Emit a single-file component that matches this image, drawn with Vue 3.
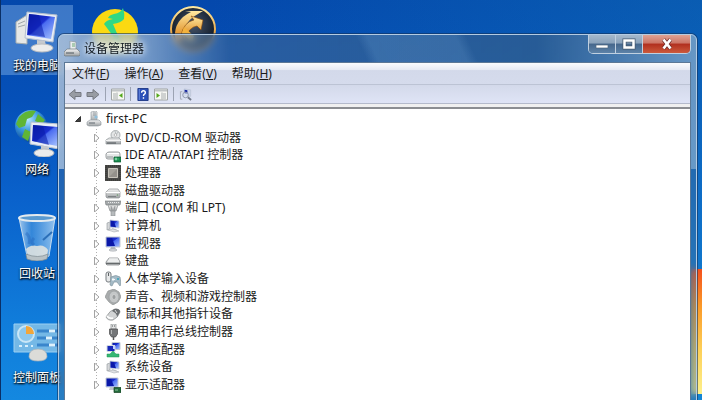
<template>
  <div class="desktop">
    <!-- shared drawings, used by id -->
    <svg class="sprite" aria-hidden="true">
      <defs>
        <linearGradient id="screen" x1="0" y1="0" x2="1" y2="1">
          <stop offset="0" stop-color="#0818a0" />
          <stop offset="0.45" stop-color="#1a2fd0" />
          <stop offset="0.5" stop-color="#4a6cf0" />
          <stop offset="1" stop-color="#a8c4ff" />
        </linearGradient>
        <linearGradient id="metal" x1="0" y1="0" x2="0" y2="1">
          <stop offset="0" stop-color="#f4f4f4" />
          <stop offset="1" stop-color="#9da1a3" />
        </linearGradient>
        <linearGradient id="glass" x1="0" y1="0" x2="1" y2="0">
          <stop offset="0" stop-color="#c8e0f4" stop-opacity="0.8" />
          <stop offset="0.35" stop-color="#4f9be0" stop-opacity="0.6" />
          <stop offset="1" stop-color="#b5d8f5" stop-opacity="0.8" />
        </linearGradient>
        <linearGradient id="gold" x1="0" y1="0" x2="0" y2="1">
          <stop offset="0" stop-color="#ffe9a0" />
          <stop offset="1" stop-color="#d87808" />
        </linearGradient>
        <radialGradient id="globe" cx="0.4" cy="0.3" r="0.7">
          <stop offset="0" stop-color="#b8e8ff" />
          <stop offset="0.5" stop-color="#3c9ae0" />
          <stop offset="1" stop-color="#0c4c9c" />
        </radialGradient>
        <radialGradient id="dark" cx="0.5" cy="0.4" r="0.6">
          <stop offset="0" stop-color="#46566c" />
          <stop offset="1" stop-color="#0c1420" />
        </radialGradient>
      </defs>

      <symbol id="root" viewBox="0 0 16 16">
        <path d="M5 1l5-1 1 1v9l-5 1-1-1z" fill="url(#metal)" stroke="#8b949b" stroke-width=".6" />
        <path d="M7 2h3M7 4h3" stroke="#6e7b85" stroke-width=".7" />
        <circle cx="10" cy="6" r="1.6" fill="#8fc0dc" />
        <path d="M1 11l3-2h9l2 2v3l-3 1H3l-2-1z" fill="url(#metal)" stroke="#8b949b" stroke-width=".6" />
        <path d="M3 12h6" stroke="#626b72" />
      </symbol>
      <symbol id="dvd" viewBox="0 0 16 16">
        <circle cx="10.500" cy="5" r="4.500" fill="#e3e5e6" stroke="#999fa2" stroke-width=".8" />
        <path d="M10 1l1 3M13 2l-2 3" stroke="#b7bdc0" />
        <circle cx="10.500" cy="5" r="1.300" fill="#fff" stroke="#999" stroke-width=".6" />
        <path d="M1 10l3-2h10l2 2v4H1z" fill="url(#metal)" stroke="#8a9093" stroke-width=".7" />
        <path d="M1 10.500h15" stroke="#f5f5f5" />
        <path d="M2 13h9" stroke="#4d5356" />
      </symbol>
      <symbol id="ide" viewBox="0 0 16 16">
        <path d="M1 7q1-2 3-2h9q2 0 2 2v3q0 2-2 2H3q-2 0-2-2z" fill="#e4e6e6" stroke="#83888a" stroke-width=".8" />
        <path d="M2 6.500h12" stroke="#fff" />
        <path d="M2 10h6" stroke="#8f9496" />
        <path d="M9 10h7v5H9z" fill="#178a4c" stroke="#0c5a32" stroke-width=".7" />
        <path d="M10 11h2v2h-2zM13 12h1" fill="#79d0a0" stroke="#79d0a0" stroke-width=".5" />
      </symbol>
      <symbol id="cpu" viewBox="0 0 16 16">
        <path d="M0 0h16v16H0z" fill="#4a4a48" />
        <path d="M1 1h14v14H1z" fill="none" stroke="#33332f" stroke-dasharray="1 1" />
        <path d="M3.500 3.500h9v9h-9z" fill="#a5a29b" stroke="#c9c5bc" />
        <path d="M4 12l8-8v8z" fill="#94918b" />
      </symbol>
      <symbol id="disk" viewBox="0 0 16 16">
        <path d="M1 9l3-3h9l2 3v5l-1 1H2l-1-1z" fill="url(#metal)" stroke="#8f9496" stroke-width=".7" />
        <path d="M1 9.500h14" stroke="#fff" />
        <path d="M3 13.500h8" stroke="#7c8183" />
        <circle cx="12.500" cy="12" r=".8" fill="#6b9c6b" />
      </symbol>
      <symbol id="port" viewBox="0 0 16 16">
        <path d="M0 1h16l-1 4H1z" fill="#a5a9ab" stroke="#74797b" stroke-width=".6" />
        <path d="M3 2.500h11" stroke="#e9eaea" stroke-dasharray="1 1" />
        <path d="M3 5h10l-2 6H5z" fill="url(#metal)" stroke="#8b8f91" stroke-width=".7" />
        <path d="M6 11h4v5H6z" fill="#b7bbbd" stroke="#8b8f91" stroke-width=".6" />
        <path d="M6 6l1 4M10 6L9 10" stroke="#7b8082" stroke-width=".7" />
      </symbol>
      <symbol id="pc" viewBox="0 0 16 16">
        <path d="M2 5l3-1v7l-3 1z" fill="#d6d8da" stroke="#8d9499" stroke-width=".6" />
        <path d="M5 2l9 1v7l-9-1z" fill="url(#screen)" stroke="#c7cdd4" stroke-width=".8" />
        <path d="M6 3l3 .4 2 5.800L6 8.500z" fill="#0a18a8" />
        <path d="M7 10l4 1 2 2H6z" fill="#c9ccd0" />
        <path d="M3 12l5-1 6 2-5 1z" fill="#dfe1e4" stroke="#9fa5aa" stroke-width=".5" />
      </symbol>
      <symbol id="monitor" viewBox="0 0 16 16">
        <path d="M1 1h14v10H1z" fill="url(#screen)" stroke="#c3c9d2" />
        <path d="M2 2h5l3 8H2z" fill="#0a18a8" />
        <path d="M6 11h4l1 3H5z" fill="#b5bac0" />
        <ellipse cx="8" cy="14" rx="4" ry="1.200" fill="#d6d9dc" stroke="#969ca1" stroke-width=".5" />
      </symbol>
      <symbol id="keyboard" viewBox="0 0 16 16">
        <path d="M1 9l3-4h9l2 4v2l-1 1H2l-1-1z" fill="#d9dcdd" stroke="#7b8082" stroke-width=".7" />
        <path d="M4 6h9M3 8h11" stroke="#fff" />
        <path d="M1 10.500h14" stroke="#65696b" stroke-width="1.500" />
      </symbol>
      <symbol id="hid" viewBox="0 0 16 16">
        <rect x="1" y="1" width="5" height="10" rx="2" fill="#e6e8e9" stroke="#777c80" />
        <path d="M3.500 2v3" stroke="#5d6265" />
        <path d="M6 6q5-3 9 0l1 7-1 2-3-4H9l-2 4-2-1z" fill="#a4bac6" stroke="#8296a0" stroke-width=".7" />
        <path d="M8 7v3M7 8.500h3" stroke="#f5fafc" />
        <circle cx="13" cy="8" r="1" fill="#35a0b8" />
      </symbol>
      <symbol id="sound" viewBox="0 0 16 16">
        <path d="M3 2l6-2 5 3 2 5-3 5-5 3-4-3-4-5z" fill="#a9acad" stroke="#8f9394" stroke-width=".7" />
        <ellipse cx="9" cy="8" rx="5" ry="6" fill="#c4c7c8" stroke="#989c9d" stroke-width=".7" />
        <ellipse cx="9" cy="8" rx="2" ry="2.500" fill="#9b9fa0" stroke="#ddd" stroke-width=".6" />
      </symbol>
      <symbol id="mouse" viewBox="0 0 16 16">
        <path d="M1 11q4-7 9-8 5 0 5 3-2 6-7 8-5 1-7-3z" fill="#d2d4d5" stroke="#85898b" stroke-width=".7" />
        <path d="M9 3q6-1 6 3l-3 5q0-4-5-6z" fill="#6a6e71" />
        <path d="M10 4l2 3" stroke="#d8d8d8" />
        <path d="M2 10q2 3 6 2" stroke="#fff" stroke-width="1.500" fill="none" />
      </symbol>
      <symbol id="usb" viewBox="0 0 16 16">
        <path d="M6 0h5v5H6z" fill="#e2e4e5" stroke="#8b8f91" stroke-width=".7" />
        <path d="M7 2h1M9 2h1" stroke="#555" />
        <path d="M4.500 5h8v5l-2 3h-4l-2-3z" fill="#747678" stroke="#4a4c4e" stroke-width=".7" />
        <path d="M6.500 6v4" stroke="#b7b9ba" />
        <path d="M8.500 13v3" stroke="#555" stroke-width="1.500" />
      </symbol>
      <symbol id="net" viewBox="0 0 16 16">
        <path d="M7 .5h8v7H7z" fill="url(#screen)" stroke="#c0c8d2" />
        <path d="M2 3.500h8v6H2z" fill="#1828b8" stroke="#d3dae2" />
        <path d="M8 4h2v3H8z" fill="#c5d5fa" />
        <path d="M8 9l3 3h3v3H2v-3h3z" fill="#36b873" stroke="#219656" stroke-width=".5" />
      </symbol>
      <symbol id="display" viewBox="0 0 16 16">
        <path d="M1 1h12v9H1z" fill="url(#screen)" stroke="#c3c9d2" />
        <path d="M2 2h4l3 7H2z" fill="#0a18a8" />
        <path d="M5 10h4l1 3H4z" fill="#c2c6ca" />
        <path d="M9 10.500h7v5H9z" fill="#246b3c" stroke="#12401f" stroke-width=".7" />
        <path d="M10 13h3" stroke="#8fc59d" />
      </symbol>
      <symbol id="manager" viewBox="0 0 16 16">
        <path d="M6 0l6 1v9l-6-1z" fill="#e9edf0" stroke="#8c969e" stroke-width=".7" />
        <path d="M8 3h3M8 5h3" stroke="#6ca875" />
        <path d="M0 11l3-3h10l3 3v3l-1 1H1l-1-1z" fill="url(#metal)" stroke="#6e7880" stroke-width=".7" />
        <path d="M2 12h8" stroke="#4d565d" />
      </symbol>

      <symbol id="arrow" viewBox="0 0 14 12">
        <path d="M1 6l6-5v3h6v4H7v3z" fill="#989ca3" stroke="#747880" stroke-width="1" />
      </symbol>
      <symbol id="pane" viewBox="0 0 14 12">
        <path d="M.5.500h13v11H.5z" fill="#f7f8f4" stroke="#a0a5a5" />
        <path d="M1 2h12" stroke="#bfc3c5" stroke-width="2" />
        <path d="M6 4v7M2 5.500h3M2 7.500h3M2 9.500h3" stroke="#a7acae" />
        <path d="M11.500 4.500v5L8 7z" fill="#55a81c" />
      </symbol>
      <symbol id="help" viewBox="0 0 12 14">
        <path d="M.5.500h11v13H.5z" fill="#2b50b8" stroke="#1c3684" />
        <path d="M2 1v12" stroke="#6d8ce0" />
        <path d="M4.500 5q0-2 2-2t2 2q0 1-1 1.500T6.500 8.500M6.500 10v1.500" fill="none" stroke="#fff" stroke-width="1.500" />
      </symbol>
      <symbol id="scan" viewBox="0 0 14 14">
        <path d="M1 4v8M1 4h2M1 12h2" stroke="#a3a9b5" fill="none" />
        <path d="M5 1l7 1v7l-7-1z" fill="#cdd6ec" stroke="#bcc4d4" stroke-width=".8" />
        <path d="M5.500 2l3 .5v4l-3-.5z" fill="#1626a0" />
        <circle cx="6.500" cy="7.500" r="3" fill="#dfe6f4" fill-opacity=".6" stroke="#8b94a8" />
        <path d="M9 10l3.500 3" stroke="#737a8a" stroke-width="2" />
      </symbol>

      <symbol id="big-pc" viewBox="0 0 48 48">
        <path d="M3 17l11-7v29L3 38z" fill="#e6e8e6" stroke="#a4acae" />
        <path d="M5 19l7-3M5 22l7-2" stroke="#9fa6a8" />
        <path d="M14 7l30 3-4 27-28-4z" fill="#e8edf5" stroke="#b5c0cf" />
        <path d="M16 9l26 3-4 22-24-4z" fill="url(#screen)" />
        <path d="M17 9l9 1 6 22-17-3z" fill="#0a1ba8" fill-opacity=".55" />
        <path d="M24 35l8 1 1 5h-9z" fill="#c5c9ce" />
        <ellipse cx="29" cy="43" rx="11" ry="4" fill="#ececec" stroke="#b9bcc0" />
      </symbol>
      <symbol id="big-net" viewBox="0 0 48 48">
        <circle cx="18" cy="17" r="16" fill="url(#globe)" />
        <path d="M6 8q8-8 17-6l-4 6-5 2-2 7-6 2-3-4zM12 20l6 3-3 9-6-4zM25 5l7 6-3 4-7-3z" fill="#5fb536" />
        <path d="M18 13l29 2-1 25-29-5z" fill="#e8edf5" stroke="#b5c0cf" />
        <path d="M20 16l25 2-1 19-25-5z" fill="url(#screen)" />
        <path d="M21 16l9 1 6 19-16-4z" fill="#0a1ba8" fill-opacity=".55" />
        <path d="M28 36l8 2v5h-8z" fill="#c5c9ce" />
        <ellipse cx="31" cy="44" rx="10" ry="4" fill="#ececec" stroke="#b9bcc0" />
      </symbol>
      <symbol id="big-bin" viewBox="0 0 48 48">
        <path d="M6 5h36l-6 38q-12 6-22 0z" fill="url(#glass)" stroke="#c5dcef" />
        <path d="M13 36q5-5 11-3 7-2 11 4l-1 6q-10 4-19 0z" fill="#e9e8e1" fill-opacity=".85" />
        <path d="M13 20q5 4 3 11M21 25q-4 4 0 7" fill="none" stroke="#2566bc" stroke-width="3" stroke-opacity=".45" />
        <path d="M30 27l9-8" stroke="#2c6fb8" stroke-width="2" />
        <path d="M13 41q12 5 22 0l-1 5q-10 4-20 0z" fill="#b9c2c6" stroke="#7c8990" stroke-width=".7" />
        <ellipse cx="24" cy="5" rx="18" ry="3" fill="#5a9ad0" stroke="#e4eaee" stroke-width="2" />
      </symbol>
      <symbol id="big-panel" viewBox="0 0 48 48">
        <path d="M1 7h46v28H1z" fill="#74b8e6" stroke="#9cd0f2" />
        <circle cx="13" cy="17" r="8" fill="#8cc8ee" stroke="#c9e6f7" stroke-width="2" />
        <path d="M13 17V9q7 0 8 8z" fill="#f2a63a" />
        <path d="M24 14h22M24 21h22M24 28h22" stroke="#3a86cc" stroke-width="3" />
        <path d="M36 14h6M33 21h6M36 28h6" stroke="#def2fc" stroke-width="3" />
        <path d="M6 29h3M12 29h3M18 29h2" stroke="#d6eefc" stroke-width="2" />
        <path d="M16 40q0-8 9-8t9 8q-1 4-9 4t-9-4z" fill="#dcdcd8" stroke="#a9b2b8" stroke-width=".7" />
      </symbol>
      <symbol id="big-music" viewBox="0 0 48 48">
        <circle cx="24" cy="27" r="23" fill="#fbd912" />
        <path d="M17 13q1-3 6-4 7-1 9-6 2 6 1 11-3 4-11 5l6 14v6L13 19q2-4 9-5z" fill="#31d884" />
      </symbol>
      <symbol id="big-game" viewBox="0 0 48 48">
        <circle cx="24" cy="24" r="22" fill="url(#dark)" stroke="url(#gold)" stroke-width="2" />
        <path d="M6 32Q5 15 22 7l-6-1h18l-5 3Q14 17 13 34l-5 3z" fill="url(#gold)" />
        <path d="M12 30q3-13 13-15l-3-4 12 4-2 10-4-4q-8 1-12 13z" fill="url(#gold)" stroke="#8a4a08" stroke-width=".6" />
        <path d="M15 22l10 9-2 6-10-9z" fill="#f3b23c" />
      </symbol>
    </svg>

    <div class="flag"></div>

    <div class="shortcuts">
      <a
        v-for="item in shortcuts"
        :key="item.icon"
        href="#"
        class="shortcut"
        :class="{ selected: item.selected, top: item.top }"
      >
        <svg class="shortcut-icon"><use :href="'#' + item.icon" /></svg>
        <span>{{ item.label }}</span>
      </a>
    </div>

    <main class="window">
      <header class="titlebar">
        <svg class="icon"><use href="#manager" /></svg>
        <h1>设备管理器</h1>
        <div class="caption">
          <button type="button" class="min" aria-label="最小化">
            <svg viewBox="0 0 14 12"><path d="M1 7h12v3H1z" fill="#fff" stroke="#52677f" stroke-width=".7" /></svg>
          </button>
          <button type="button" class="max" aria-label="最大化">
            <svg viewBox="0 0 14 12">
              <path d="M2.500 2.500h9v7h-9z" fill="none" stroke="#44586f" stroke-width="4" />
              <path d="M2.500 2.500h9v7h-9z" fill="none" stroke="#fff" stroke-width="2.500" />
            </svg>
          </button>
          <button type="button" class="close" aria-label="关闭">
            <svg viewBox="0 0 14 12">
              <path d="M3.500 1.500l7 9M10.500 1.500l-7 9" stroke="#6a2a28" stroke-width="4" />
              <path d="M3.500 1.500l7 9M10.500 1.500l-7 9" stroke="#fff" stroke-width="2.800" />
            </svg>
          </button>
        </div>
      </header>

      <div class="client">
        <nav class="menubar">
          <button v-for="m in menus" :key="m.key" type="button">{{ m.label }}(<u>{{ m.key }}</u>)</button>
        </nav>

        <div class="toolbar">
          <button type="button" aria-label="后退"><svg class="tool"><use href="#arrow" /></svg></button>
          <button type="button" aria-label="前进"><svg class="tool flip"><use href="#arrow" /></svg></button>
          <i class="divider"></i>
          <button type="button" aria-label="显示控制台树"><svg class="tool"><use href="#pane" /></svg></button>
          <i class="divider"></i>
          <button type="button" aria-label="帮助"><svg class="tool"><use href="#help" /></svg></button>
          <button type="button" aria-label="显示操作窗格"><svg class="tool flip"><use href="#pane" /></svg></button>
          <i class="divider"></i>
          <button type="button" aria-label="扫描检测硬件改动"><svg class="tool"><use href="#scan" /></svg></button>
        </div>

        <div class="tree">
          <div class="row root-row">
            <button type="button" class="expander" aria-label="折叠" @click="open = !open">
              <svg viewBox="0 0 8 8"><path d="M6.500 1.500v5h-5z" fill="#404040" stroke="#333" /></svg>
            </button>
            <svg class="icon"><use href="#root" /></svg>
            <span>first-PC</span>
          </div>
          <ul v-if="open" class="devices">
            <li v-for="d in devices" :key="d.label" class="row">
              <button type="button" class="expander" aria-label="展开">
                <svg viewBox="0 0 8 8"><path d="M1.500 0v8L6 4z" fill="#fff" stroke="#a3a3a3" /></svg>
              </button>
              <svg class="icon"><use :href="'#' + d.icon" /></svg>
              <span>{{ d.label }}</span>
            </li>
          </ul>
        </div>
      </div>
    </main>
  </div>
</template>

<script setup>
import { ref } from "vue";

const open = ref(true);

const shortcuts = [
  { icon: "big-pc", label: "我的电脑", selected: true },
  { icon: "big-net", label: "网络" },
  { icon: "big-bin", label: "回收站" },
  { icon: "big-panel", label: "控制面板" },
  { icon: "big-music", label: "", top: true },
  { icon: "big-game", label: "", top: true },
];

const menus = [
  { label: "文件", key: "F" },
  { label: "操作", key: "A" },
  { label: "查看", key: "V" },
  { label: "帮助", key: "H" },
];

const devices = [
  { icon: "dvd", label: "DVD/CD-ROM 驱动器" },
  { icon: "ide", label: "IDE ATA/ATAPI 控制器" },
  { icon: "cpu", label: "处理器" },
  { icon: "disk", label: "磁盘驱动器" },
  { icon: "port", label: "端口 (COM 和 LPT)" },
  { icon: "pc", label: "计算机" },
  { icon: "monitor", label: "监视器" },
  { icon: "keyboard", label: "键盘" },
  { icon: "hid", label: "人体学输入设备" },
  { icon: "sound", label: "声音、视频和游戏控制器" },
  { icon: "mouse", label: "鼠标和其他指针设备" },
  { icon: "usb", label: "通用串行总线控制器" },
  { icon: "net", label: "网络适配器" },
  { icon: "pc", label: "系统设备" },
  { icon: "display", label: "显示适配器" },
];
</script>

<style>
body {
  background: #0a4db0;
}
</style>

<style scoped>
.desktop {
  position: relative;
  min-height: 100vh;
  overflow: hidden;
  box-sizing: border-box;
  border-left: 1px solid #0a2f66;
  background:
    linear-gradient(to right, transparent 30%, rgba(20, 130, 190, 0.35)),
    linear-gradient(to bottom, #0448ac 0%, #0550b8 25%, #0a62cc 50%, #107cda 80%, #1488e0 100%);
  font-family: "Noto Sans", "Noto Sans CJK SC", sans-serif;
  font-size: 12px;
  line-height: 16px;
  color: #1a1a1a;
}

.sprite {
  position: absolute;
  width: 0;
  height: 0;
}

.flag {
  position: absolute;
  right: 0;
  top: 269px;
  width: 12px;
  height: 125px;
  background: linear-gradient(to bottom, #f4501c, #fb9a28 30%, #fdd058 65%, #fdf08c);
}

.shortcuts {
  display: grid;
  grid-auto-flow: column;
  grid-template-rows: repeat(4, 70px);
  grid-auto-columns: 72px;
  gap: 34px 6px;
  padding: 5px 0;
}

.shortcut {
  display: flex;
  flex-direction: column;
  align-items: center;
  gap: 5px;
  color: #fff;
  text-decoration: none;
  white-space: nowrap;
  text-shadow: 0 1px 2px #000, 1px 1px 2px #000;
}

/* starts a new column of the desktop grid */
.top {
  grid-row: 1;
}

.selected {
  background: rgba(140, 185, 235, 0.42);
}

.shortcut-icon {
  width: 48px;
  height: 48px;
}

.window {
  position: absolute;
  top: 34px;
  right: 5px;
  bottom: -8px;
  left: 57px;
  box-sizing: border-box;
  display: flex;
  flex-direction: column;
  padding: 0 5px 6px;
  border: 1px solid #b4cbe2;
  border-radius: 6px 6px 0 0;
  box-shadow: 0 0 0 1px rgba(20, 50, 90, 0.6);
  background:
    linear-gradient(65deg, transparent 280px, rgba(120, 170, 215, 0.22) 290px, rgba(120, 170, 215, 0.2) 370px, transparent 380px) no-repeat 0 0 / 100% 27px,
    linear-gradient(to right, rgba(205, 218, 232, 0.65), rgba(190, 208, 228, 0.5) 90px, rgba(60, 100, 150, 0.3) 170px, rgba(50, 85, 125, 0.4) 75%, rgba(150, 185, 215, 0.6)) no-repeat 0 0 / 100% 134px,
    rgba(70, 110, 150, 0.4);
  backdrop-filter: blur(3px);
}

.titlebar {
  display: flex;
  align-items: center;
  gap: 4px;
  height: 27px;
}

.titlebar h1 {
  flex: 1;
  margin: 0;
  font-size: 12px;
  font-weight: 400;
  color: #101820;
  text-shadow: 0 0 6px #fff, 0 0 8px #fff;
}

.caption {
  display: flex;
  align-self: flex-start;
  height: 18px;
  border: 1px solid #c0d0e0;
  border-top: 0;
  border-radius: 0 0 5px 5px;
  overflow: hidden;
}

button {
  margin: 0;
  padding: 0;
  border: 0;
  background: none;
  font: inherit;
  color: inherit;
}

.caption button {
  display: flex;
  align-items: center;
  justify-content: center;
  width: 27px;
  border-right: 1px solid #c0d0e0;
  background: linear-gradient(to bottom, #a4b8cc 0%, #8aa2bb 45%, #46678c 50%, #5c82a8 100%);
}

.caption .close {
  width: 47px;
  border-right: 0;
  background: linear-gradient(to bottom, #dda294 0%, #cc7465 45%, #b12f1e 50%, #cc5a3c 100%);
}

.caption svg {
  width: 14px;
  height: 12px;
}

.client {
  flex: 1;
  display: flex;
  flex-direction: column;
  border: 1px solid #5c7896;
  background: #f0f0f0;
}

.menubar {
  display: flex;
  align-items: center;
  gap: 15px;
  height: 21px;
  padding: 0 7px;
  border-bottom: 1px solid #bcc3d4;
  background: linear-gradient(to bottom, #fafbfd 0%, #e6eaf4 32%, #d3d9ea 36%, #d5dbec 100%);
}

.toolbar {
  display: flex;
  align-items: center;
  gap: 4px;
  height: 18px;
  margin-bottom: 3px;
  padding: 0 3px;
  border-bottom: 1px solid #b4bacb;
  background: linear-gradient(to bottom, #d3d9ea, #dfe4f6);
}

.toolbar button {
  display: flex;
}

.tool {
  width: 14px;
  height: 13px;
}

.flip {
  transform: scaleX(-1);
}

.divider {
  width: 1px;
  height: 14px;
  margin: 0 1px;
  background: #9ca3b3;
}

.tree {
  flex: 1;
  border-top: 2px solid #8c8e92;
  background: #fff;
}

.row {
  display: flex;
  align-items: center;
  white-space: nowrap;
}

.root-row {
  height: 20px;
  padding-left: 9px;
}

.expander {
  display: flex;
  width: 8px;
  margin-right: 4px;
}

.expander svg {
  width: 8px;
  height: 8px;
}

.icon {
  flex: none;
  width: 16px;
  height: 16px;
}

.row .icon {
  margin-right: 4px;
}

/* fifteen equal rows share the list height, joined by a dotted guide */
.devices {
  display: grid;
  grid-auto-rows: 1fr;
  min-height: 265px;
  margin: 0;
  padding: 0 0 0 28px;
  list-style: none;
  background: repeating-linear-gradient(to bottom, #b0b0b0 0 1px, #fff 1px 3px) no-repeat 31px 0 / 1px 258px;
}
</style>
